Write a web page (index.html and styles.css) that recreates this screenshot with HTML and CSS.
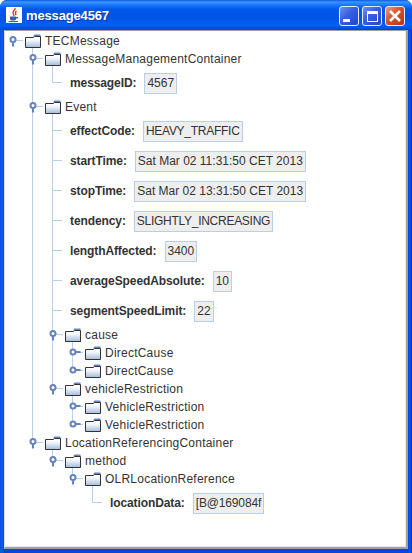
FILE: index.html
```html
<!DOCTYPE html>
<html lang="en">
<head>
    <meta charset="UTF-8">
    <title>message4567</title>
    <link rel="stylesheet" href="styles.css">
</head>
<body>

    <svg class="defs" width="0" height="0">
        <defs>
            <linearGradient id="folder-fill" x1="0" y1="0" x2="0" y2="1">
                <stop offset="0" stop-color="#ffffff"/>
                <stop offset=".35" stop-color="#f2f6fb"/>
                <stop offset="1" stop-color="#a3bcdb"/>
            </linearGradient>
            <symbol id="folder" viewBox="0 0 16 14">
                <path d="M9.500 .5H15.500V2.500H8Z" fill="#6382bf"/>
                <path d="M.5 3.500H8.500L9.500 2.500H15.500V13.500H.5Z" fill="url(#folder-fill)" stroke="#333"/>
                <path d="M1 4.500H15" stroke="#fff"/>
            </symbol>
            <symbol id="open" viewBox="0 0 13 14">
                <circle cx="5" cy="5.500" r="2.500" fill="#fff" stroke="#6382bf" stroke-width="2"/>
                <path d="M5 8.500V12.500" stroke="#6382bf" stroke-width="2"/>
            </symbol>
            <symbol id="closed" viewBox="0 0 13 14">
                <circle cx="5" cy="6" r="2.500" fill="#fff" stroke="#6382bf" stroke-width="2"/>
                <path d="M8 6H12.500" stroke="#6382bf" stroke-width="2"/>
            </symbol>
        </defs>
    </svg>

    <div class="window">
        <div class="titlebar">
            <svg class="app-icon" width="16" height="16" viewBox="0 0 16 16">
                <rect width="16" height="16" fill="#fff"/>
                <path d="M9 1C10 3 6 4 7 6.500C7.500 7.500 8 8 8 9M10.500 4C9 5 9 6 10 8" fill="none" stroke="#d8281c" stroke-width="1.300"/>
                <path d="M4 9.500H10V12C10 13 9 13.500 7 13.500C5 13.500 4 13 4 12ZM10 10H12V11.500H10" fill="#3b5fa8"/>
                <path d="M2.500 14.500H12" stroke="#3b5fa8"/>
            </svg>
            <span class="title">message4567</span>
            <div class="buttons">
                <div class="btn"><span class="glyph-min"></span></div>
                <div class="btn"><span class="glyph-max"></span></div>
                <div class="btn btn-close">
                    <svg width="14" height="14" viewBox="0 0 14 14"><path d="M2 2L12 12M12 2L2 12" stroke="#fff" stroke-width="2.600"/></svg>
                </div>
            </div>
        </div>

        <div class="content">
            <ul class="tree">
                <li class="node">
                    <div class="row">
                        <svg class="handle"><use href="#open"/></svg>
                        <svg class="folder"><use href="#folder"/></svg>
                        <span>TECMessage</span>
                    </div>
                    <ul>
                        <li class="node">
                            <div class="row">
                                <svg class="handle"><use href="#open"/></svg>
                                <svg class="folder"><use href="#folder"/></svg>
                                <span>MessageManagementContainer</span>
                            </div>
                            <ul>
                                <li class="leaf"><b>messageID:</b><span class="value">4567</span></li>
                            </ul>
                        </li>
                        <li class="node">
                            <div class="row">
                                <svg class="handle"><use href="#open"/></svg>
                                <svg class="folder"><use href="#folder"/></svg>
                                <span>Event</span>
                            </div>
                            <ul>
                                <li class="leaf"><b>effectCode:</b><span class="value caps">HEAVY_TRAFFIC</span></li>
                                <li class="leaf"><b>startTime:</b><span class="value">Sat Mar 02 11:31:50 CET 2013</span></li>
                                <li class="leaf"><b>stopTime:</b><span class="value">Sat Mar 02 13:31:50 CET 2013</span></li>
                                <li class="leaf"><b>tendency:</b><span class="value caps">SLIGHTLY_INCREASING</span></li>
                                <li class="leaf"><b>lengthAffected:</b><span class="value">3400</span></li>
                                <li class="leaf"><b>averageSpeedAbsolute:</b><span class="value">10</span></li>
                                <li class="leaf"><b>segmentSpeedLimit:</b><span class="value">22</span></li>
                                <li class="node">
                                    <div class="row">
                                        <svg class="handle"><use href="#open"/></svg>
                                        <svg class="folder"><use href="#folder"/></svg>
                                        <span>cause</span>
                                    </div>
                                    <ul>
                                        <li class="node">
                                            <div class="row">
                                                <svg class="handle"><use href="#closed"/></svg>
                                                <svg class="folder"><use href="#folder"/></svg>
                                                <span>DirectCause</span>
                                            </div>
                                        </li>
                                        <li class="node">
                                            <div class="row">
                                                <svg class="handle"><use href="#closed"/></svg>
                                                <svg class="folder"><use href="#folder"/></svg>
                                                <span>DirectCause</span>
                                            </div>
                                        </li>
                                    </ul>
                                </li>
                                <li class="node">
                                    <div class="row">
                                        <svg class="handle"><use href="#open"/></svg>
                                        <svg class="folder"><use href="#folder"/></svg>
                                        <span>vehicleRestriction</span>
                                    </div>
                                    <ul>
                                        <li class="node">
                                            <div class="row">
                                                <svg class="handle"><use href="#closed"/></svg>
                                                <svg class="folder"><use href="#folder"/></svg>
                                                <span>VehicleRestriction</span>
                                            </div>
                                        </li>
                                        <li class="node">
                                            <div class="row">
                                                <svg class="handle"><use href="#closed"/></svg>
                                                <svg class="folder"><use href="#folder"/></svg>
                                                <span>VehicleRestriction</span>
                                            </div>
                                        </li>
                                    </ul>
                                </li>
                            </ul>
                        </li>
                        <li class="node">
                            <div class="row">
                                <svg class="handle"><use href="#open"/></svg>
                                <svg class="folder"><use href="#folder"/></svg>
                                <span>LocationReferencingContainer</span>
                            </div>
                            <ul>
                                <li class="node">
                                    <div class="row">
                                        <svg class="handle"><use href="#open"/></svg>
                                        <svg class="folder"><use href="#folder"/></svg>
                                        <span>method</span>
                                    </div>
                                    <ul>
                                        <li class="node">
                                            <div class="row">
                                                <svg class="handle"><use href="#open"/></svg>
                                                <svg class="folder"><use href="#folder"/></svg>
                                                <span>OLRLocationReference</span>
                                            </div>
                                            <ul>
                                                <li class="leaf"><b>locationData:</b><span class="value tight">[B@169084f</span></li>
                                            </ul>
                                        </li>
                                    </ul>
                                </li>
                            </ul>
                        </li>
                    </ul>
                </li>
            </ul>
        </div>
    </div>

</body>
</html>
```

FILE: styles.css
```css
html, body {
    margin: 0;
    height: 100%;
    background-color: #fff;
}

.defs {
    position: absolute;
}

.window {
    box-sizing: border-box;
    width: 412px;
    height: 553px;
    display: flex;
    flex-direction: column;
    padding: 0 4px 4px 4px;
    border-radius: 7px 7px 0 0;
    background: linear-gradient(to right, #0a4fe0 0, #0c5df0 2px, #0846d8 4px, #0846d8 408px, #0c56e8 410px, #0033b8 412px);
    font-family: "Liberation Sans", Arial, sans-serif;
    font-size: 12px;
    color: #333;
    overflow: hidden;
}

.titlebar {
    flex: none;
    height: 30px;
    margin: 0 -4px;
    padding: 0 7px 0 6px;
    display: flex;
    align-items: center;
    gap: 4px;
    background: linear-gradient(#0a5ae0 0, #3d95ff 2px, #1a78fa 5px, #0058ea 9px, #0054e4 18px, #0160f5 25px, #0053e0 28px, #0040c8 30px);
}

.app-icon {
    margin-top: -1px;
}

.title {
    font-size: 13px;
    font-weight: bold;
    letter-spacing: -.15px;
    color: #fff;
    text-shadow: 1px 1px 0 #0a3aa8;
}

.buttons {
    margin-left: auto;
    margin-top: 2px;
    display: flex;
    gap: 3px;
}

.btn {
    box-sizing: border-box;
    width: 20px;
    height: 20px;
    display: flex;
    align-items: center;
    justify-content: center;
    position: relative;
    border: 1px solid #e8eefc;
    border-radius: 3px;
    background: linear-gradient(135deg, #6f8ff0 0, #3360e0 45%, #2247cc 100%);
}

.btn-close {
    background: linear-gradient(135deg, #ee9a80 0, #d9502a 45%, #b83412 100%);
}

.glyph-min {
    width: 7px;
    height: 3px;
    margin: 9px 6px 0 0;
    background-color: #fff;
}

.glyph-max {
    box-sizing: border-box;
    width: 11px;
    height: 11px;
    border: 1px solid #fff;
    border-top-width: 3px;
}

.content {
    flex: 1;
    min-height: 0;
    background-color: #fff;
    border-left: 1px solid #dcdcdc;
    border-right: 2px solid #a0a0a0;
    border-bottom: 2px solid #a0a0a0;
    border-top: 1px solid #a0a0a0;
    box-shadow: inset -1px -1px 0 #e8e8e8;
}

.tree, .tree ul {
    list-style: none;
    margin: 0;
    padding: 0;
}

.tree {
    padding-top: 1px;
}

.tree ul {
    margin-left: 20px;
}

.tree ul li {
    position: relative;
}

/* vertical connector */
.tree ul li::before {
    content: "";
    position: absolute;
    left: 7px;
    top: -2px;
    bottom: 0;
    width: 1px;
    background-color: #b8cfe5;
}

.tree ul li:last-child::before {
    bottom: auto;
    height: 11px;
}

.tree ul li.leaf:last-child::before {
    height: 16px;
}

.row {
    position: relative;
    height: 18px;
    display: flex;
    align-items: center;
    padding-left: 20px;
    letter-spacing: .23px;
}

/* horizontal connector */
.row::before {
    content: "";
    position: absolute;
    left: 7px;
    top: 8px;
    width: 11px;
    height: 1px;
    background-color: #b8cfe5;
}

.handle {
    position: absolute;
    left: 3px;
    top: 2px;
    width: 13px;
    height: 14px;
}

.folder {
    position: relative;
    width: 16px;
    height: 14px;
    margin-top: -1px;
    margin-right: 4px;
}

.leaf {
    height: 30px;
    display: flex;
    align-items: center;
    padding-left: 25px;
}

.leaf::after {
    content: "";
    position: absolute;
    left: 7px;
    top: 14px;
    width: 10px;
    height: 1px;
    background-color: #b8cfe5;
}

.leaf b {
    margin-right: 8px;
    letter-spacing: -.1px;
}

.value {
    padding: 3px 2px;
    line-height: 13px;
    border: 1px solid #b8cfe5;
    background-color: #eee;
}

.caps {
    letter-spacing: -.27px;
}

.tight {
    letter-spacing: -.15px;
}
```
